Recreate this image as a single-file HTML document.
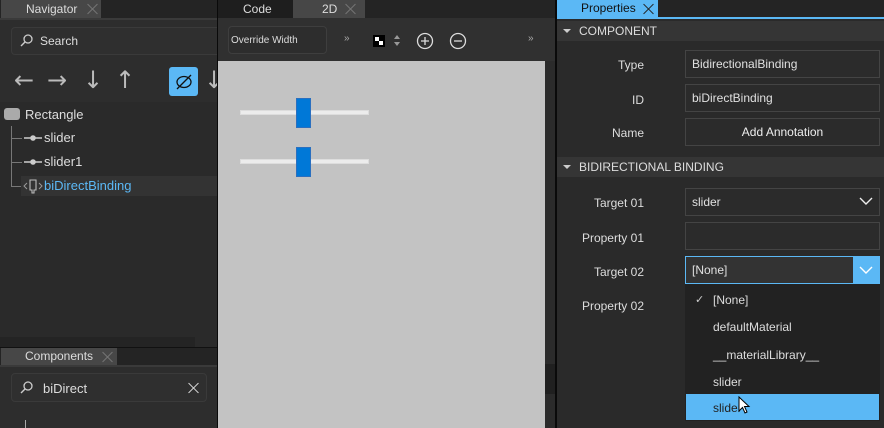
<!DOCTYPE html>
<html><head><style>
*{margin:0;padding:0;box-sizing:border-box}
body{width:884px;height:428px;background:#2a2a2a;font-family:"Liberation Sans",sans-serif;font-size:12px;color:#ddd;position:relative;overflow:hidden}
.a{position:absolute}
.tab{position:absolute;top:0;height:18px;line-height:18px;font-size:12px}
.x{position:absolute;width:12px;height:12px}
.x:before,.x:after{content:"";position:absolute;left:5px;top:-1px;width:1px;height:14px;background:currentColor;transform:rotate(45deg)}
.x:after{transform:rotate(-45deg)}
.lbl{position:absolute;text-align:right;width:88px;left:556px;font-size:12px;color:#ddd}
.fld{position:absolute;left:685px;width:195px;height:28px;border:1px solid #444;background:#2b2b2b;line-height:26px;padding-left:6px;font-size:12px;color:#e0e0e0}
.sec{position:absolute;left:557px;width:327px;height:20px;background:#353535;line-height:20px;padding-left:22px;font-size:12px;color:#ddd}
.sec:before{content:"";position:absolute;left:6px;top:8px;border-left:4px solid transparent;border-right:4px solid transparent;border-top:4px solid #ccc}
.dd{position:absolute;left:713px;font-size:12px;color:#ddd}
.ar{position:absolute;top:66px;font-size:24px;color:#bbb;font-family:"DejaVu Sans",sans-serif}
</style></head><body>
<div class="a" style="left:0;top:0;width:217px;height:18px;background:#242424"></div>
<div class="tab" style="left:1px;width:100px;background:#474747;color:#ddd;padding-left:25px">Navigator<span class="x" style="left:86px;top:3px;color:#777"></span></div>
<div class="a" style="left:0;top:18px;width:217px;height:2px;background:#3a3a3a"></div>
<div class="a" style="left:0;top:20px;width:217px;height:82px;background:#2d2d2d"></div>
<div class="a" style="left:11px;top:27px;width:206px;height:28px;border:1px solid #3a3a3a;border-right:none;border-radius:4px 0 0 4px;background:#2f2f2f"></div>
<svg class="a" style="left:20px;top:34px" width="14" height="14"><circle cx="8" cy="5" r="4" fill="none" stroke="#ccc" stroke-width="1.3"/><line x1="5" y1="8" x2="1" y2="12" stroke="#ccc" stroke-width="1.4"/></svg>
<div class="a" style="left:40px;top:34px;font-size:12px;color:#ddd">Search</div>
<div class="ar" style="left:14px">←</div>
<div class="ar" style="left:47px">→</div>
<div class="ar" style="left:83px">↓</div>
<div class="ar" style="left:115px">↑</div>
<div class="a" style="left:169px;top:67px;width:29px;height:29px;background:#5bb8f5;border-radius:3px"></div>
<svg class="a" style="left:173px;top:71px" width="22" height="22"><ellipse cx="11" cy="11" rx="7" ry="5.5" fill="none" stroke="#111" stroke-width="1.3"/><line x1="4" y1="18" x2="18" y2="4" stroke="#111" stroke-width="1.3"/></svg>
<div class="ar" style="left:204px">↓</div>
<div class="a" style="left:0;top:102px;width:217px;height:245px;background:#2a2a2a"></div>
<div class="a" style="left:4px;top:108px;width:16px;height:12px;background:#aaa;border-radius:3px"></div>
<div class="a" style="left:25px;top:107px;font-size:13px;color:#ddd">Rectangle</div>
<div class="a" style="left:11px;top:126px;width:1px;height:60px;background:#777"></div>
<div class="a" style="left:11px;top:186px;width:10px;height:1px;background:#777"></div>
<div class="a" style="left:12px;top:138px;width:10px;height:1px;background:#777"></div>
<div class="a" style="left:12px;top:162px;width:10px;height:1px;background:#777"></div>
<svg class="a" style="left:24px;top:133px" width="18" height="10"><line x1="0" y1="5" x2="18" y2="5" stroke="#ccc" stroke-width="1.6"/><circle cx="9" cy="5" r="2.8" fill="#ccc"/></svg>
<div class="a" style="left:44px;top:130px;font-size:13px;color:#ddd">slider</div>
<svg class="a" style="left:24px;top:157px" width="18" height="10"><line x1="0" y1="5" x2="18" y2="5" stroke="#ccc" stroke-width="1.6"/><circle cx="9" cy="5" r="2.8" fill="#ccc"/></svg>
<div class="a" style="left:44px;top:154px;font-size:13px;color:#ddd">slider1</div>
<div class="a" style="left:21px;top:176px;width:196px;height:20px;background:#333"></div>
<svg class="a" style="left:23px;top:177px" width="20" height="18"><path d="M4 6 L1 9 L4 12 M16 6 L19 9 L16 12" fill="none" stroke="#999" stroke-width="1"/><path d="M7 3 H13 V13 H11 V16 H9 V13 H7 Z" fill="none" stroke="#bbb" stroke-width="1.1"/></svg>
<div class="a" style="left:44px;top:178px;font-size:13px;color:#5bb8f5">biDirectBinding</div>
<div class="a" style="left:0;top:337px;width:195px;height:10px;background:#242424"></div>
<div class="a" style="left:0;top:347px;width:217px;height:1px;background:#111"></div>
<div class="a" style="left:0;top:348px;width:217px;height:17px;background:#242424"></div>
<div class="tab" style="top:348px;left:1px;width:116px;height:17px;line-height:17px;background:#474747;padding-left:24px">Components<span class="x" style="left:101px;top:3px;color:#777"></span></div>
<div class="a" style="left:0;top:365px;width:217px;height:2px;background:#3a3a3a"></div>
<div class="a" style="left:0;top:367px;width:217px;height:61px;background:#2d2d2d"></div>
<div class="a" style="left:11px;top:373px;width:196px;height:29px;border:1px solid #3a3a3a;border-radius:4px;background:#2f2f2f"></div>
<svg class="a" style="left:20px;top:381px" width="14" height="14"><circle cx="8" cy="5" r="4" fill="none" stroke="#ccc" stroke-width="1.3"/><line x1="5" y1="8" x2="1" y2="12" stroke="#ccc" stroke-width="1.4"/></svg>
<div class="a" style="left:43px;top:381px;font-size:13px;color:#ddd">biDirect</div>
<span class="x" style="left:188px;top:382px;color:#ddd"></span>
<div class="a" style="left:25px;top:420px;width:1px;height:8px;background:#aaa"></div>
<div class="a" style="left:217px;top:0;width:1px;height:428px;background:#0a0a0a"></div>
<div class="a" style="left:218px;top:0;width:337px;height:18px;background:#242424"></div>
<div class="tab" style="left:218px;width:75px;background:#1e1e1e;padding-left:25px;color:#ddd">Code</div>
<div class="tab" style="left:293px;width:72px;background:#474747;padding-left:29px;color:#ddd">2D<span class="x" style="left:52px;top:3px;color:#777"></span></div>
<div class="a" style="left:218px;top:18px;width:337px;height:43px;background:#303030"></div>
<div class="a" style="left:228px;top:26px;width:99px;height:28px;border:1px solid #3e3e3e;border-radius:4px;background:#2d2d2d"></div>
<div class="a" style="left:231px;top:35px;font-size:10px;color:#ddd">Override Width</div>
<div class="a" style="left:344px;top:33px;font-size:10px;color:#aaa">»</div>
<div class="a" style="left:373px;top:35px;width:12px;height:12px;background:#000"></div>
<div class="a" style="left:375px;top:37px;width:4px;height:4px;background:#fff"></div>
<div class="a" style="left:379px;top:41px;width:4px;height:4px;background:#fff"></div>
<svg class="a" style="left:393px;top:34px" width="10" height="14"><path d="M1 5 L4 1 L7 5Z M1 8 L4 12 L7 8Z" fill="#999"/></svg>
<svg class="a" style="left:415px;top:31px" width="20" height="20"><circle cx="10" cy="10" r="7.5" fill="none" stroke="#ddd" stroke-width="1.3"/><path d="M6 10H14M10 6V14" stroke="#ddd" stroke-width="1.3"/></svg>
<svg class="a" style="left:448px;top:31px" width="20" height="20"><circle cx="10" cy="10" r="7.5" fill="none" stroke="#ddd" stroke-width="1.3"/><path d="M6 10H14" stroke="#ddd" stroke-width="1.3"/></svg>
<div class="a" style="left:528px;top:33px;font-size:10px;color:#aaa">»</div>
<div class="a" style="left:218px;top:61px;width:327px;height:367px;background:#c3c3c3"></div>
<div class="a" style="left:240px;top:110px;width:129px;height:5px;background:#ececec;border:1px solid #ddd"></div>
<div class="a" style="left:296px;top:98px;width:15px;height:30px;background:#0078d7;border:1px solid #2a6fbf"></div>
<div class="a" style="left:240px;top:159px;width:129px;height:5px;background:#ececec;border:1px solid #ddd"></div>
<div class="a" style="left:296px;top:147px;width:15px;height:30px;background:#0078d7;border:1px solid #2a6fbf"></div>
<div class="a" style="left:545px;top:61px;width:10px;height:367px;background:#2b2b2b"></div>
<div class="a" style="left:545px;top:364px;width:10px;height:30px;background:#202020"></div>
<div class="a" style="left:555px;top:0;width:2px;height:428px;background:#0a0a0a"></div>
<div class="a" style="left:557px;top:0;width:327px;height:17px;background:#242424"></div>
<div class="tab" style="left:557px;width:101px;height:17px;line-height:17px;background:#5bb8f5;color:#111;padding-left:24px">Properties<span class="x" style="left:86px;top:3px;color:#222"></span></div>
<div class="a" style="left:557px;top:17px;width:327px;height:2px;background:#5bb8f5"></div>
<div class="sec" style="top:21px">COMPONENT</div>
<div class="lbl" style="top:58px">Type</div>
<div class="fld" style="top:50px">BidirectionalBinding</div>
<div class="lbl" style="top:93px">ID</div>
<div class="fld" style="top:84px">biDirectBinding</div>
<div class="lbl" style="top:126px">Name</div>
<div class="fld" style="top:118px;text-align:center;padding:0;color:#eee">Add Annotation</div>
<div class="sec" style="top:157px">BIDIRECTIONAL BINDING</div>
<div class="lbl" style="top:196px">Target 01</div>
<div class="fld" style="top:188px">slider</div>
<svg class="a" style="left:859px;top:197px" width="14" height="9"><path d="M1 1 L7 7 L13 1" fill="none" stroke="#eee" stroke-width="1.4"/></svg>
<div class="lbl" style="top:231px">Property 01</div>
<div class="fld" style="top:222px"></div>
<div class="lbl" style="top:265px">Target 02</div>
<div class="fld" style="top:256px;border-color:#5bb8f5;background:#333">[None]</div>
<div class="a" style="left:853px;top:256px;width:27px;height:28px;background:#5bb8f5"></div>
<svg class="a" style="left:859px;top:266px" width="14" height="9"><path d="M1 1 L7 7 L13 1" fill="none" stroke="#fff" stroke-width="1.4"/></svg>
<div class="lbl" style="top:299px">Property 02</div>
<div class="a" style="left:685px;top:284px;width:195px;height:137px;background:#222"></div>
<div class="a" style="left:695px;top:293px;font-size:11px;color:#ccc">✓</div>
<div class="dd" style="top:293px">[None]</div>
<div class="dd" style="top:320px">defaultMaterial</div>
<div class="dd" style="top:348px">__materialLibrary__</div>
<div class="dd" style="top:375px">slider</div>
<div class="a" style="left:686px;top:394px;width:193px;height:26px;background:#5bb8f5"></div>
<div class="dd" style="top:401px;color:#222">slider</div>
<svg class="a" style="left:738px;top:396px" width="14" height="20"><path d="M1 1 L1 15 L4.5 11.5 L7 17 L9 16 L6.5 10.5 L11 10.5 Z" fill="#fff" stroke="#000" stroke-width="1"/></svg>
</body></html>
